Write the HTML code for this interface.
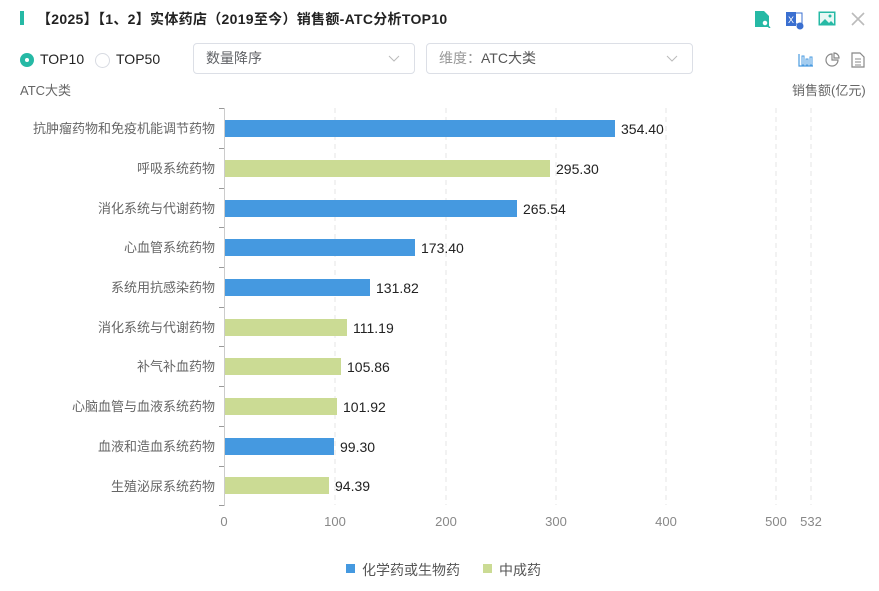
<!DOCTYPE html><html><head><meta charset="utf-8"><style>
body{margin:0;width:879px;height:591px;background:#fff;font-family:"Liberation Sans","Noto Sans CJK SC",sans-serif;overflow:hidden;position:relative}
.a{position:absolute}
.sel{position:absolute;top:43px;height:31px;border:1px solid #dcdfe6;border-radius:4px;box-sizing:border-box;font-size:14px;color:#606266;line-height:29px;padding-left:12px}
.sel svg{position:absolute;right:14px;top:11px}
</style></head><body>
<div class="a" style="left:20px;top:11px;width:4px;height:14px;background:#26b9a5"></div>
<div class="a" style="left:37px;top:9px;font-size:14px;font-weight:bold;color:#222;letter-spacing:0.3px">【2025】【1、2】实体药店（2019至今）销售额-ATC分析TOP10</div>
<svg class="a" style="left:753px;top:10px" width="18" height="18"><path d="M2 1h9l5 5v11H2z" fill="#26b9a5"/><circle cx="12" cy="13" r="3" fill="#fff" stroke="#26b9a5" stroke-width="1.5"/><path d="M14 15l3 3" stroke="#26b9a5" stroke-width="1.5"/></svg>
<svg class="a" style="left:785px;top:10px" width="20" height="20"><rect x="1" y="2" width="10" height="14" fill="#3a6fd0"/><text x="3" y="13" font-size="9" fill="#fff" font-family="Liberation Sans">X</text><rect x="10" y="3" width="7" height="11" fill="none" stroke="#3a6fd0"/><circle cx="15" cy="16" r="3.5" fill="#3a6fd0"/></svg>
<svg class="a" style="left:818px;top:11px" width="19" height="16"><rect x="0.5" y="0.5" width="17" height="14" fill="#26b9a5"/><rect x="2" y="2" width="14" height="11" fill="#e8f8f5"/><path d="M2 13l5-5 4 4 2-2 3 3z" fill="#26b9a5"/><circle cx="12" cy="5" r="1.5" fill="#26b9a5"/></svg>
<svg class="a" style="left:851px;top:12px" width="14" height="14"><path d="M1 1l12 12M13 1L1 13" stroke="#bbb" stroke-width="1.6"/></svg>

<div class="a" style="left:20px;top:53px;width:14px;height:14px;border-radius:50%;background:#26b9a5"></div>
<div class="a" style="left:25px;top:58px;width:4px;height:4px;border-radius:50%;background:#fff"></div>
<div class="a" style="left:40px;top:51px;font-size:14px;color:#222">TOP10</div>
<div class="a" style="left:95px;top:53px;width:13px;height:13px;border-radius:50%;border:1px solid #d8dbe2"></div>
<div class="a" style="left:116px;top:51px;font-size:14px;color:#222">TOP50</div>
<div class="sel" style="left:193px;width:222px">数量降序<svg width="12" height="8"><path d="M1 1l5 5 5-5" fill="none" stroke="#bbb"/></svg></div>
<div class="sel" style="left:426px;width:267px;color:#999">维度：<span style="color:#555">ATC大类</span><svg width="12" height="8"><path d="M1 1l5 5 5-5" fill="none" stroke="#bbb"/></svg></div>
<svg class="a" style="left:798px;top:53px" width="16" height="14"><path d="M1 1v12h14" fill="none" stroke="#4a9be0" stroke-width="1.2"/><rect x="4" y="3" width="2" height="9" fill="none" stroke="#4a9be0"/><rect x="8" y="6" width="2" height="6" fill="none" stroke="#4a9be0"/><rect x="12" y="4" width="2" height="8" fill="none" stroke="#4a9be0"/></svg>
<svg class="a" style="left:824px;top:52px" width="16" height="16"><path d="M8 2a6 6 0 1 0 6 6H8z" fill="none" stroke="#888" stroke-width="1.2"/><path d="M10 1a5 5 0 0 1 5 5h-5z" fill="none" stroke="#888" stroke-width="1.2"/></svg>
<svg class="a" style="left:851px;top:52px" width="14" height="16"><path d="M1 1h8l4 4v10H1z" fill="none" stroke="#888" stroke-width="1.2"/><path d="M4 7h6M4 10h6M4 13h6" stroke="#888"/></svg>
<div class="a" style="left:20px;top:80px;font-size:13px;color:#666">ATC大类</div>
<div class="a" style="left:792px;top:80px;font-size:13px;color:#666">销售额(亿元)</div>

<svg class="a" style="left:0;top:0" width="879" height="591" font-family="Liberation Sans, Noto Sans CJK SC, sans-serif">
<g stroke="#e6e6e6" stroke-dasharray="5,4">
<line x1="335" y1="108" x2="335" y2="505"/><line x1="446" y1="108" x2="446" y2="505"/><line x1="556" y1="108" x2="556" y2="505"/><line x1="666" y1="108" x2="666" y2="505"/><line x1="776" y1="108" x2="776" y2="505"/><line x1="811" y1="108" x2="811" y2="505"/>
</g>
<line x1="224.5" y1="108" x2="224.5" y2="506" stroke="#ccc"/>
<g stroke="#999">
<line x1="219" y1="108.5" x2="224" y2="108.5"/><line x1="219" y1="148.5" x2="224" y2="148.5"/><line x1="219" y1="188.5" x2="224" y2="188.5"/><line x1="219" y1="227.5" x2="224" y2="227.5"/><line x1="219" y1="267.5" x2="224" y2="267.5"/><line x1="219" y1="307.5" x2="224" y2="307.5"/><line x1="219" y1="346.5" x2="224" y2="346.5"/><line x1="219" y1="386.5" x2="224" y2="386.5"/><line x1="219" y1="426.5" x2="224" y2="426.5"/><line x1="219" y1="466.5" x2="224" y2="466.5"/><line x1="219" y1="505.5" x2="224" y2="505.5"/>
</g>
<g font-size="13" fill="#666" text-anchor="end">
<text x="215" y="133">抗肿瘤药物和免疫机能调节药物</text><text x="215" y="173">呼吸系统药物</text><text x="215" y="213">消化系统与代谢药物</text><text x="215" y="252">心血管系统药物</text><text x="215" y="292">系统用抗感染药物</text><text x="215" y="332">消化系统与代谢药物</text><text x="215" y="371">补气补血药物</text><text x="215" y="411">心脑血管与血液系统药物</text><text x="215" y="451">血液和造血系统药物</text><text x="215" y="491">生殖泌尿系统药物</text>
</g>
<g>
<rect x="225" y="120" width="390" height="17" fill="#4599e0"/>
<rect x="225" y="160" width="325" height="17" fill="#cbdb94"/>
<rect x="225" y="200" width="292" height="17" fill="#4599e0"/>
<rect x="225" y="239" width="190" height="17" fill="#4599e0"/>
<rect x="225" y="279" width="145" height="17" fill="#4599e0"/>
<rect x="225" y="319" width="122" height="17" fill="#cbdb94"/>
<rect x="225" y="358" width="116" height="17" fill="#cbdb94"/>
<rect x="225" y="398" width="112" height="17" fill="#cbdb94"/>
<rect x="225" y="438" width="109" height="17" fill="#4599e0"/>
<rect x="225" y="477" width="104" height="17" fill="#cbdb94"/>
</g>
<g font-size="14" fill="#222">
<text x="621" y="134">354.40</text><text x="556" y="174">295.30</text><text x="523" y="214">265.54</text><text x="421" y="253">173.40</text><text x="376" y="293">131.82</text><text x="353" y="333">111.19</text><text x="347" y="372">105.86</text><text x="343" y="412">101.92</text><text x="340" y="452">99.30</text><text x="335" y="491">94.39</text>
</g>
<g font-size="13" fill="#888" text-anchor="middle">
<text x="224" y="526">0</text><text x="335" y="526">100</text><text x="446" y="526">200</text><text x="556" y="526">300</text><text x="666" y="526">400</text><text x="776" y="526">500</text><text x="811" y="526">532</text>
</g>
<rect x="346" y="564" width="9" height="9" fill="#4599e0"/>
<text x="362" y="575" font-size="14" fill="#555">化学药或生物药</text>
<rect x="483" y="564" width="9" height="9" fill="#cbdb94"/>
<text x="499" y="575" font-size="14" fill="#555">中成药</text>
</svg>
</body></html>
